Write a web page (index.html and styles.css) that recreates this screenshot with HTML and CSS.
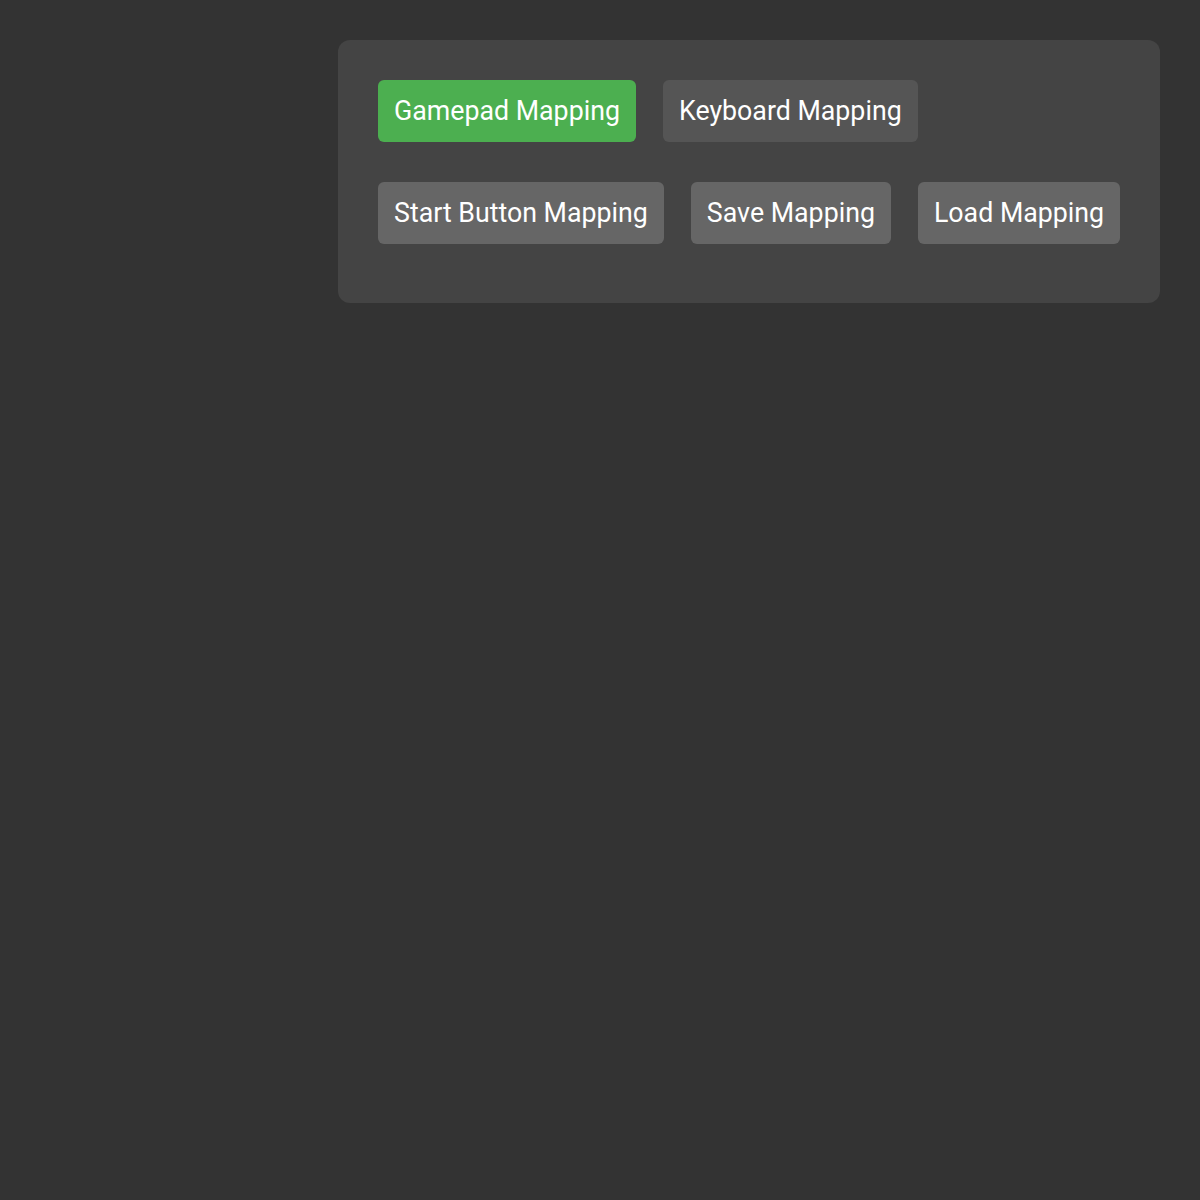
FILE: index.html
```html
<!DOCTYPE html>
<html>
<head>
<meta charset="utf-8">
<link rel="stylesheet" href="styles.css">
</head>
<body>
<div class="layout">
  <div class="panel">
    <div class="row">
      <button class="btn btn-active">Gamepad Mapping</button>
      <button class="btn btn-tab">Keyboard Mapping</button>
    </div>
    <div class="row">
      <button class="btn btn-action">Start Button Mapping</button>
      <button class="btn btn-action">Save Mapping</button>
      <button class="btn btn-action">Load Mapping</button>
    </div>
  </div>
</div>
</body>
</html>
```
FILE: styles.css
```css
html, body {
  margin: 0;
  padding: 0;
  background: #333333;
  height: 100%;
}
body {
  font-family: Roboto, "Liberation Sans", sans-serif;
  color: #ffffff;
}
.layout {
  display: flex;
  padding: 40px 40px 40px 338px;
}
.panel {
  flex: 1;
  min-width: 0;
  background: #444444;
  border-radius: 12px;
  padding: 40px 40px 59px 40px;
  display: flex;
  flex-direction: column;
  gap: 40px;
}
.row {
  display: flex;
  gap: 27px;
}
.btn {
  flex-shrink: 0;
  white-space: nowrap;
  font-family: Roboto, "Liberation Sans", sans-serif;
  font-size: 26.75px;
  line-height: 30px;
  padding: 16px 16px;
  border: none;
  border-radius: 6px;
  color: #ffffff;
  cursor: pointer;
}
.btn-active {
  background: #4caf50;
}
.btn-tab {
  background: #555555;
}
.btn-action {
  background: #666666;
}
```
